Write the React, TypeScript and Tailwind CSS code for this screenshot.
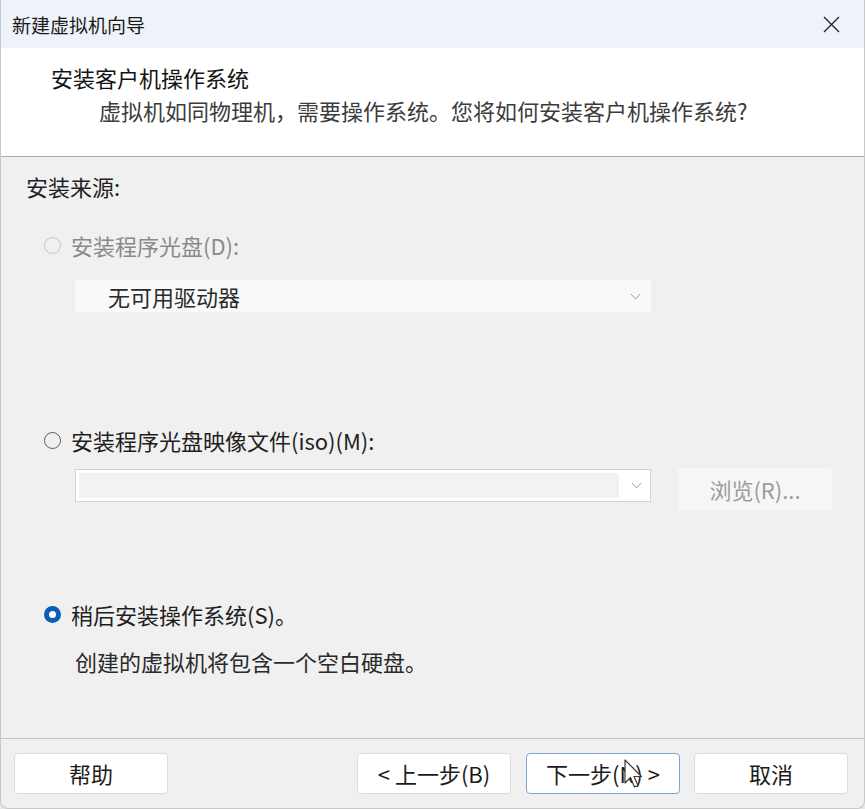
import React from 'react';

const font = { fontFamily: '"Noto Sans CJK SC", "Noto Sans", sans-serif' };

function Radio({ checked, disabled }: { checked?: boolean; disabled?: boolean }) {
  if (checked) {
    return (
      <span className="flex h-[17px] w-[17px] items-center justify-center rounded-full bg-[#0a5fb4]">
        <span className="h-[7px] w-[7px] rounded-full bg-white" />
      </span>
    );
  }
  return (
    <span
      className={[
        'h-[17px] w-[17px] rounded-full border bg-transparent',
        disabled ? 'border-[#c4c4c4]' : 'border-[#5a5a5a]',
      ].join(' ')}
    />
  );
}

function Chevron() {
  return (
    <svg width="11" height="7" viewBox="0 0 11 7" fill="none" stroke="#a0a0a0" strokeWidth="1">
      <polyline points="1,1 5.5,6 10,1" />
    </svg>
  );
}

function FooterButton({ label, focused }: { label: string; focused?: boolean }) {
  return (
    <button
      className={[
        'flex h-[41px] w-[154px] items-center justify-center rounded-[4px] bg-white text-[22px] text-[#1b1b1b]',
        focused ? 'border border-[#7fa2cf]' : 'border border-[#dcdcdc]',
      ].join(' ')}
    >
      {label}
    </button>
  );
}

export default function App() {
  return (
    <div className="h-[809px] w-[865px] overflow-hidden bg-[#e8e8e8]" style={font}>
      <div className="flex h-full flex-col overflow-hidden rounded-b-[8px] border-x border-b border-[#c8c8c8] bg-[#f0f0f0]">
        {/* Title bar */}
        <div className="flex h-[48px] shrink-0 items-center justify-between bg-[#eef2f9] pl-[11px] pr-[24px]">
          <span className="text-[19px] leading-none text-[#1a1a1a]">新建虚拟机向导</span>
          <svg width="17" height="17" viewBox="0 0 17 17" stroke="#1f1f1f" strokeWidth="1.3">
            <line x1="1" y1="1" x2="16" y2="16" />
            <line x1="16" y1="1" x2="1" y2="16" />
          </svg>
        </div>

        {/* Header */}
        <div className="h-[109px] shrink-0 border-b border-[#a8a8a8] bg-white pl-[50px] pt-[14px]">
          <div className="h-[30px] text-[22px] leading-[30px] text-[#141414]">安装客户机操作系统</div>
          <div className="ml-[48px] mt-[3px] h-[30px] text-[22px] leading-[30px] text-[#3c3c3c]">
            虚拟机如同物理机，需要操作系统。您将如何安装客户机操作系统?
          </div>
        </div>

        {/* Body */}
        <div className="flex h-[582px] shrink-0 flex-col border-b border-[#c4c4c4] pl-[25px] pt-[14px]">
          <div className="h-[30px] text-[22px] leading-[30px] text-[#222]">安装来源:</div>

          <div className="ml-[18px] mt-[29px] flex h-[30px] items-center gap-[10px]">
            <Radio disabled />
            <span className="text-[22px] leading-[30px] text-[#8a8a8a]">安装程序光盘(D):</span>
          </div>

          <div className="ml-[49px] mt-[20px] flex h-[32px] w-[576px] items-center justify-between bg-[#f9f9f9] pl-[33px] pr-[10px]">
            <span className="text-[22px] leading-none text-[#2a2a2a]">无可用驱动器</span>
            <Chevron />
          </div>

          <div className="ml-[18px] mt-[113px] flex h-[30px] items-center gap-[10px]">
            <Radio />
            <span className="text-[22px] leading-[30px] text-[#1e1e1e]">安装程序光盘映像文件(iso)(M):</span>
          </div>

          <div className="ml-[49px] mt-[13px] flex items-start gap-[27px]">
            <div className="mt-[1px] flex h-[33px] w-[576px] border border-[#d2d2d2] bg-white">
              <div className="m-[3px] flex-1 bg-[#f2f2f2]" />
              <div className="flex w-[28px] items-center justify-center">
                <Chevron />
              </div>
            </div>
            <div className="flex h-[43px] w-[154px] items-center justify-center rounded-[3px] bg-[#f6f6f6] text-[22px] text-[#9c9c9c]">
              浏览(R)...
            </div>
          </div>

          <div className="ml-[18px] mt-[88px] flex h-[30px] items-center gap-[10px]">
            <Radio checked />
            <span className="text-[22px] leading-[30px] text-[#1e1e1e]">稍后安装操作系统(S)。</span>
          </div>

          <div className="ml-[49px] mt-[17px] h-[30px] text-[22px] leading-[30px] text-[#2a2a2a]">
            创建的虚拟机将包含一个空白硬盘。
          </div>
        </div>

        {/* Footer */}
        <div className="relative flex flex-1 items-start pl-[13px] pr-[16px] pt-[14px]">
          <FooterButton label="帮助" />
          <div className="ml-auto flex gap-[14px]">
            <div className="flex gap-[15px]">
              <FooterButton label="< 上一步(B)" />
              <FooterButton label="下一步(N) >" focused />
            </div>
            <FooterButton label="取消" />
          </div>

          {/* mouse pointer */}
          <svg
            className="absolute left-[623px] top-[20px]"
            width="20"
            height="32"
            viewBox="0 0 20 32"
          >
            <path
              d="M1 1 L1 24 L6.5 18.5 L10.5 28 L14 26.5 L10 17.5 L17.5 17.5 Z"
              fill="#ffffff"
              stroke="#3a3a3a"
              strokeWidth="1.2"
              strokeLinejoin="round"
            />
          </svg>
        </div>
      </div>
    </div>
  );
}
